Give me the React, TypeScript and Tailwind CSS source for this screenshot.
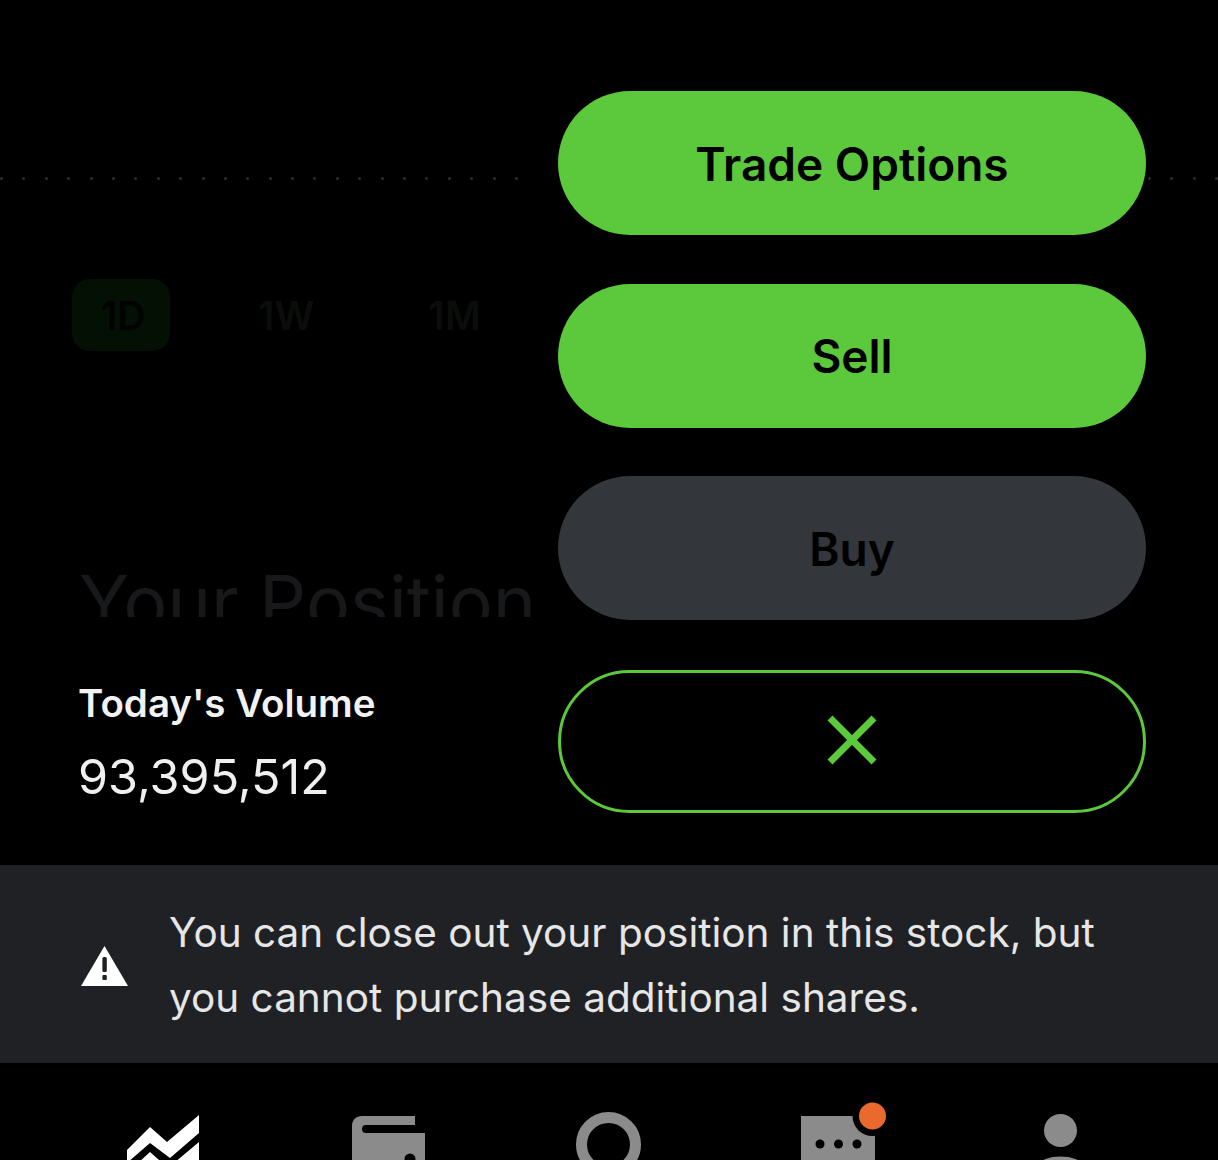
import { X } from "lucide-react";

const font = { fontFamily: '"Inter", "Roboto", sans-serif' };

function Dots({ count }: { count: number }) {
  return (
    <div className="flex h-[3px] gap-[19.4px] overflow-hidden">
      {Array.from({ length: count }).map((_, i) => (
        <span key={i} className="h-[3px] w-[3px] shrink-0 rounded-full bg-[#2c2e30]" />
      ))}
    </div>
  );
}

function ActionButton({ label, muted }: { label: string; muted?: boolean }) {
  return (
    <button
      className={
        "flex h-[144px] w-full shrink-0 items-center justify-center rounded-full pt-[2px] text-[46px] font-semibold text-black " +
        (muted ? "bg-[#33363a]" : "bg-[#5cc83c]")
      }
    >
      {label}
    </button>
  );
}

export default function App() {
  return (
    <div style={font} className="flex h-[1160px] w-[1218px] flex-col overflow-hidden bg-black text-white">
      <div className="flex h-[865px] shrink-0">
        {/* dimmed chart behind the menu */}
        <div className="flex w-[558px] shrink-0 flex-col">
          <div className="mt-[177px]">
            <Dots count={24} />
          </div>
          <div className="mt-[99px] flex items-center pl-[72px] text-[39px] font-semibold">
            <div className="flex h-[72px] w-[98px] items-center justify-center rounded-[18px] bg-[#051005] pt-[2px] pl-[4px] text-[#010301]">
              1D
            </div>
            <span className="ml-[88px] pt-[2px] text-[#0b0d0b]">1W</span>
            <span className="ml-[114px] pt-[2px] text-[#0b0d0b]">1M</span>
          </div>
          <div className="mt-[212px] h-[54px] overflow-hidden pl-[79px]">
            <div className="text-[73.6px] leading-[80px] whitespace-nowrap text-[#17181a]">Your Position</div>
          </div>
          <div className="mt-[63px] pl-[78px] text-[38.5px] leading-[46px] font-semibold text-[#f2f2f2]">
            Today's Volume
          </div>
          <div className="mt-[23px] pl-[78px] text-[48.5px] leading-[56px] text-[#f0f0f0]">93,395,512</div>
        </div>

        <div className="flex w-[588px] shrink-0 flex-col gap-[48.5px] pt-[91px]">
          <ActionButton label="Trade Options" />
          <ActionButton label="Sell" />
          <ActionButton label="Buy" muted />
          <button className="mt-[1.5px] flex h-[143px] w-full shrink-0 items-center justify-center rounded-full border-[3px] border-[#5cc83c] pb-[3px] text-[#5cc83c]">
            <X size={88} strokeWidth={1.9} strokeLinecap="butt" />
          </button>
        </div>

        <div className="mt-[177px] ml-[2px] w-[70px] shrink-0">
          <Dots count={4} />
        </div>
      </div>

      {/* warning banner */}
      <div className="flex h-[198px] shrink-0 items-center bg-[#202124] pl-[81px]">
        <svg width="47" height="40" viewBox="0 0 47 40" className="mt-[4px] shrink-0">
          <path d="M23.5 0 47 40H0Z" fill="#fff" />
          <rect x="21.4" y="11" width="4.4" height="15" rx="1.5" fill="#202124" />
          <rect x="21.4" y="29" width="4.4" height="5" rx="1" fill="#202124" />
        </svg>
        <p className="mt-[2px] ml-[41px] text-[40.5px] leading-[65px] text-[#e6e6e6]">
          You can close out your position in this stock, but
          <br />
          you cannot purchase additional shares.
        </p>
      </div>

      {/* tab bar, cut off by the screenshot */}
      <nav className="relative h-[97px] shrink-0">
        <svg className="absolute top-[50px] left-[125px]" width="76" height="47" viewBox="0 0 76 47">
          <path d="M2 37 25 14 42 29 74 2V20L45 45 25 30 2 50Z" fill="#fff" />
          <path d="M2 60 25 39 43 55 74 29V60Z" fill="#fff" />
        </svg>
        <svg className="absolute top-[50px] left-[352px]" width="74" height="47" viewBox="0 0 74 47">
          <path d="M10 3H63V12H14A4 4 0 0 0 14 20H73V47H0V13C0 7 4 3 10 3Z" fill="#8b8b8b" />
          <circle cx="58" cy="46" r="5.5" fill="#000" />
        </svg>
        <svg className="absolute top-[48px] left-[575px]" width="68" height="49" viewBox="0 0 68 49" fill="none">
          <circle cx="33.5" cy="33.5" r="27" stroke="#8b8b8b" strokeWidth="11" />
        </svg>
        <svg className="absolute top-[36px] left-[798px]" width="92" height="61" viewBox="0 0 92 61">
          <path d="M3 17H77V61H3Z" fill="#8b8b8b" />
          <circle cx="74.5" cy="17" r="20" fill="#000" />
          <circle cx="74.5" cy="17" r="13.5" fill="#ea6a2e" />
          <circle cx="22" cy="45" r="4.5" fill="#000" />
          <circle cx="40.5" cy="45" r="4.5" fill="#000" />
          <circle cx="59" cy="45" r="4.5" fill="#000" />
        </svg>
        <svg className="absolute top-[50px] left-[1040px]" width="42" height="47" viewBox="0 0 42 47">
          <circle cx="20.5" cy="17.5" r="16.5" fill="#8b8b8b" />
          <ellipse cx="20.5" cy="52" rx="21" ry="8.5" fill="#8b8b8b" />
        </svg>
      </nav>
    </div>
  );
}
